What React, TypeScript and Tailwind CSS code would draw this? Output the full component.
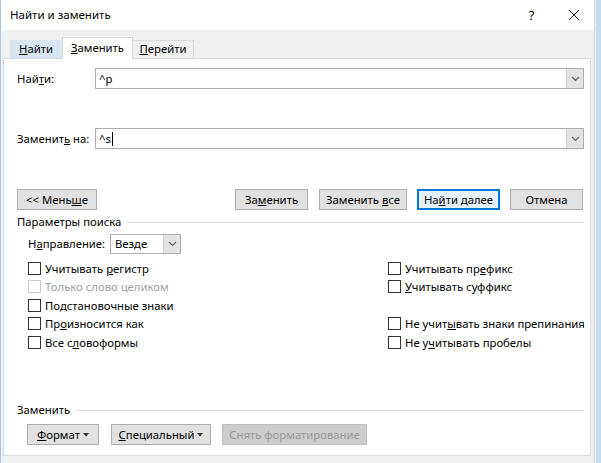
import React from "react";

const Chevron = () => (
  <svg width="9" height="6" viewBox="0 0 9 6" className="block">
    <path d="M1 1 L4.5 4.5 L8 1" fill="none" stroke="#606060" strokeWidth="1.2" />
  </svg>
);

const Caret = () => (
  <svg width="6" height="4" viewBox="0 0 6 4" className="inline-block ml-[3px] mb-[2px]">
    <path d="M0 0 L6 0 L3 3.5 Z" fill="#333" />
  </svg>
);

const Combo = ({ value, cursor }: { value: string; cursor?: boolean }) => (
  <div className="flex-1 h-[21px] flex border border-[#abadb3] bg-white">
    <div className="flex-1 flex items-center pl-[3px] leading-none">
      <span>{value}</span>
      {cursor && <span className="w-px h-[14px] bg-black ml-px" />}
    </div>
    <div className="w-[17px] h-full flex items-center justify-center bg-[#e3e3e3] border-l border-[#cfcfcf]">
      <Chevron />
    </div>
  </div>
);

const Btn = ({
  children,
  w,
  def,
  disabled,
}: {
  children: React.ReactNode;
  w: string;
  def?: boolean;
  disabled?: boolean;
}) => (
  <div
    className={`${w} h-[21px] flex items-center justify-center leading-none whitespace-nowrap ${
      disabled
        ? "bg-[#cccccc] border border-[#bfbfbf] text-[#9a9a9a]"
        : def
        ? "bg-[#e5f1fb] border-2 border-[#0078d7]"
        : "bg-[#e1e1e1] border border-[#adadad]"
    }`}
  >
    <span>{children}</span>
  </div>
);

const Check = ({ children, disabled }: { children?: React.ReactNode; disabled?: boolean }) => (
  <div className="h-[18.5px] flex items-center whitespace-nowrap">
    {children !== undefined && (
      <>
        <div
          className={`w-[13px] h-[13px] border bg-white ${
            disabled ? "border-[#cccccc]" : "border-[#333333]"
          }`}
        />
        <span className={`ml-[4px] leading-none ${disabled ? "text-[#a0a0a0]" : ""}`}>{children}</span>
      </>
    )}
  </div>
);

export default function App() {
  return (
    <div className="w-[601px] h-[463px] flex bg-[#c6dbef] text-[11.3px] text-black font-['Segoe_UI','Noto_Sans',sans-serif] overflow-hidden">
      <div className="w-[595px] h-full flex flex-col bg-white border-l border-[#a8c4e2] border-r border-r-[#d6d6d6]">
        {/* Title bar */}
        <div className="h-[30px] flex items-center pl-[9px] bg-white">
          <span className="flex-1 leading-none text-[11.5px]">Найти и заменить</span>
          <span className="w-[45px] text-center text-[13px] leading-none">?</span>
          <span className="w-[40px] flex justify-center">
            <svg width="12" height="12" viewBox="0 0 12 12">
              <path d="M1 1 L11 11 M11 1 L1 11" stroke="#222" strokeWidth="1" />
            </svg>
          </span>
        </div>
        {/* Body */}
        <div className="flex-1 flex flex-col bg-[#f0f0f0] pl-[2px] pr-[3px]">
          {/* Tabs */}
          <div className="h-[28px] flex items-end pl-[7px] relative z-10">
            <div className="w-[52px] h-[18px] flex items-center justify-center bg-[#d8e6f3] border border-[#d8e6f3] border-b-0">
              <span><u>Н</u>айти</span>
            </div>
            <div className="w-[71px] h-[22px] -mb-px flex items-center justify-center bg-white border border-[#d9d9d9] border-b-0">
              <span><u>З</u>аменить</span>
            </div>
            <div className="w-[61px] h-[18px] flex items-center justify-center bg-[#f0f0f0] border border-[#d9d9d9] border-b-0 border-l-0">
              <span><u>П</u>ерейти</span>
            </div>
          </div>
          {/* Panel */}
          <div className="h-[398px] flex flex-col bg-white border border-[#d9d9d9] pl-[13px] pr-[6px]">
            <div className="mt-[9px] flex items-center">
              <span className="w-[78px] leading-none">Най<u>т</u>и:</span>
              <Combo value="^p" />
            </div>
            <div className="mt-[39px] flex items-center">
              <span className="w-[78px] leading-none">Заменит<u>ь</u> на:</span>
              <Combo value="^s" cursor />
            </div>
            <div className="mt-[40px] mr-px flex items-center">
              <Btn w="w-[80px]">&lt;&lt; Мень<u>ш</u>е</Btn>
              <div className="flex-1" />
              <Btn w="w-[73px]">За<u>м</u>енить</Btn>
              <div className="w-[11px]" />
              <Btn w="w-[88px]">Заменить <u>в</u>се</Btn>
              <div className="w-[10px]" />
              <Btn w="w-[83px]" def>На<u>й</u>ти далее</Btn>
              <div className="w-[10px]" />
              <Btn w="w-[73px]">Отмена</Btn>
            </div>
            <div className="mt-[5px] h-[14px] flex items-center">
              <span className="leading-none">Параметры поиска</span>
              <div className="flex-1 ml-[6px] h-px bg-[#dcdcdc]" />
            </div>
            <div className="mt-[5px] pl-[11px] flex items-center">
              <span className="w-[82px] leading-none">Н<u>а</u>правление:</span>
              <div className="w-[71px] h-[20px] flex border border-[#abadb3]">
                <div className="flex-1 flex items-center pl-[4px] leading-none">Везде</div>
                <div className="w-[17px] flex items-center justify-center bg-[#e3e3e3] border-l border-[#cfcfcf]">
                  <Chevron />
                </div>
              </div>
            </div>
            <div className="mt-[5px] pl-[11px] grid grid-cols-[360px_1fr]">
              <Check>Учитывать <u>р</u>егистр</Check>
              <Check>Учитывать пр<u>е</u>фикс</Check>
              <Check disabled>Только слово целиком</Check>
              <Check><u>У</u>читывать суффикс</Check>
              <Check>Подстановочные знаки</Check>
              <Check />
              <Check>Пр<u>о</u>износится как</Check>
              <Check>Не учит<u>ы</u>вать знаки препинания</Check>
              <Check>Все с<u>л</u>овоформы</Check>
              <Check>Не у<u>ч</u>итывать пробелы</Check>
            </div>
            <div className="mt-auto h-[14px] flex items-center">
              <span className="leading-none">Заменить</span>
              <div className="flex-1 ml-[6px] h-px bg-[#dcdcdc]" />
            </div>
            <div className="mt-[7px] mb-[10px] pl-[10px] flex items-center">
              <Btn w="w-[72px]"><u>Ф</u>ормат<Caret /></Btn>
              <div className="w-[12px]" />
              <Btn w="w-[100px]"><u>С</u>пециальный<Caret /></Btn>
              <div className="w-[11px]" />
              <Btn w="w-[145px]" disabled>Снять форматирование</Btn>
            </div>
          </div>
        </div>
      </div>
      <div className="flex-1 bg-[#c6dbef] border-l border-[#eef3f8]" />
    </div>
  );
}
